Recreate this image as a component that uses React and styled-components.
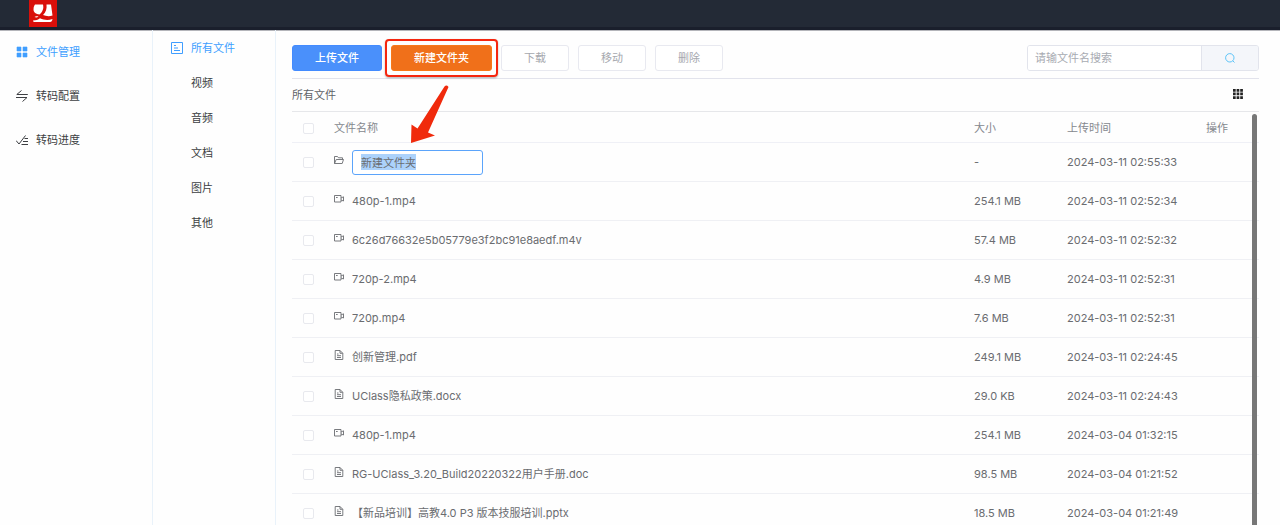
import { useEffect, useRef } from 'react';
import styled, { createGlobalStyle } from 'styled-components';

const GlobalStyle = createGlobalStyle`
  * {
    box-sizing: border-box;
  }

  body {
    margin: 0;
    background: #fefefe;
    color: #606266;
    font-family: Inter, "Noto Sans CJK SC", sans-serif;
    font-size: 11px;
    line-height: 16px;
  }

  button,
  input {
    font: inherit;
  }
`;

const Page = styled.div`
  height: 100vh;
  display: flex;
  flex-direction: column;
  overflow: hidden;
`;

const TopBar = styled.header`
  height: 30px;
  flex-shrink: 0;
  padding-left: 29px;
  background: #232a36;
  border-bottom: 3px solid #1a1f2c;
  box-shadow: 0 1px 0 #b4b5ba;
`;

const Logo = styled.svg`
  display: block;
  width: 28px;
  height: 27px;
`;

const Body = styled.div`
  flex: 1;
  min-height: 0;
  display: flex;
`;

const MainNav = styled.nav`
  width: 153px;
  flex-shrink: 0;
  padding: 14px 16px;
  border-right: 1px solid #e9f2fa;
  display: flex;
  flex-direction: column;
  gap: 28px;
`;

const TypeNav = styled.nav`
  width: 123px;
  flex-shrink: 0;
  padding: 10px 18px;
  border-right: 1px solid #e9f2fa;
  display: flex;
  flex-direction: column;
  gap: 19px;
`;

const NavLink = styled.a`
  display: grid;
  grid-template-columns: 12px 1fr;
  column-gap: 8px;
  align-items: center;
  color: ${({ $active }) => ($active ? '#409eff' : '#3c3e42')};
  text-decoration: none;

  span {
    grid-column: 2;
  }
`;

const Icon = styled.svg`
  display: block;
  flex-shrink: 0;
  width: ${({ $size = 12 }) => $size}px;
  height: ${({ $size = 12 }) => $size}px;
  fill: none;
  stroke: currentColor;
`;

const Content = styled.main`
  flex: 1;
  min-width: 0;
  padding: 15px 21px 0 16px;
  display: flex;
  flex-direction: column;
`;

const Toolbar = styled.div`
  padding-bottom: 7px;
  border-bottom: 1px solid #e2e3ec;
  display: flex;
  justify-content: space-between;
`;

const Actions = styled.div`
  display: flex;
  gap: 9px;
`;

const variants = {
  primary: { bg: '#4a90fb', border: '#438bff', text: '#fff' },
  orange: { bg: '#f0701a', border: '#f87818', text: '#fff' },
  plain: { bg: '#fff', border: '#e8e9f0', text: '#a6a8ae' },
};

const Button = styled.button`
  height: 26px;
  padding: 0 22px;
  border: 1px solid ${({ $variant = 'plain' }) => variants[$variant].border};
  border-radius: 3px;
  background: ${({ $variant = 'plain' }) => variants[$variant].bg};
  color: ${({ $variant = 'plain' }) => variants[$variant].text};
  font-weight: ${({ $variant }) => ($variant ? 500 : 400)};
  white-space: nowrap;
`;

const Highlight = styled.div`
  position: relative;
`;

const HighlightFrame = styled.div`
  position: absolute;
  inset: -6px;
  border: 2px solid #f5260f;
  border-radius: 4px;
  box-shadow: 0 1px 2px rgba(0, 0, 0, 0.3);
  pointer-events: none;
`;

const Arrow = styled.svg`
  position: absolute;
  left: 18px;
  top: 38px;
  width: 42px;
  height: 62px;
  z-index: 1;
  pointer-events: none;
`;

const Search = styled.form`
  width: 232px;
  height: 26px;
  display: flex;
  border: 1px solid #e2e4ec;
  border-radius: 3px;
  overflow: hidden;
`;

const SearchInput = styled.input`
  flex: 1;
  min-width: 0;
  padding: 0 7px;
  border: 0;
  outline: 0;
  background: #fff;

  &::placeholder {
    color: #a8abb2;
  }
`;

const SearchButton = styled.button`
  width: 57px;
  padding: 0;
  border: 0;
  border-left: 1px solid #e2e4ec;
  background: #f4f6fa;
  color: #5cc3f7;
  display: grid;
  place-items: center;
`;

const PathBar = styled.div`
  height: 33px;
  padding-right: 16px;
  border-bottom: 1px solid #e6e7ea;
  display: flex;
  align-items: center;
  justify-content: space-between;
`;

const ViewButton = styled.button`
  padding: 0 0 2px;
  border: 0;
  background: none;
  color: #222;
`;

const ListArea = styled.div`
  position: relative;
  flex: 1;
  min-height: 0;
  overflow: hidden;
`;

const Thumb = styled.div`
  position: absolute;
  top: 2px;
  right: 2px;
  bottom: -6px;
  width: 5px;
  border-radius: 3px;
  background: #777;
`;

const Table = styled.table`
  width: 100%;
  table-layout: fixed;
  border-collapse: separate;
  border-spacing: 0;
  text-align: left;
`;

const HeadCell = styled.th`
  width: ${({ $width }) => ($width ? `${$width}px` : 'auto')};
  height: 31px;
  padding: 2px 0 0;
  border-bottom: 1px solid #eff0f6;
  color: #85888e;
  font-weight: 400;
`;

const Cell = styled.td`
  height: 39px;
  padding: 0;
  border-bottom: 1px solid #eff0f4;
  color: #6a6c70;
  white-space: nowrap;
`;

const Checkbox = styled.input.attrs({ type: 'checkbox' })`
  appearance: none;
  display: block;
  width: 11px;
  height: 11px;
  margin: 0 0 0 11px;
  border: 1px solid #e8e9ee;
  border-radius: 2px;
  background: #fff;
`;

const FileName = styled.div`
  display: flex;
  align-items: center;
  gap: 8px;

  svg {
    margin-bottom: 4px;
  }
`;

const NameInput = styled.input`
  width: 131px;
  height: 25px;
  padding: 0 8px;
  border: 1px solid #5ba4fb;
  border-radius: 3px;
  outline: 0;
  background: #fff;
  color: #6a6c70;

  &::selection {
    background: #acd2fb;
    color: #6a6c70;
  }
`;

const GridIcon = () => (
  <Icon viewBox="0 0 12 12" aria-hidden="true">
    <path
      d="M1 1h4v4H1zM7 1h4v4H7zM1 7h4v4H1zM7 7h4v4H7z"
      fill="currentColor"
      stroke="currentColor"
      strokeWidth=".6"
    />
  </Icon>
);

const SwapIcon = () => (
  <Icon viewBox="0 0 12 12" aria-hidden="true">
    <path d="M5.5 .5 .8 4.500h11M0 7.500h11L6.500 11.500" />
  </Icon>
);

const ProgressIcon = () => (
  <Icon viewBox="0 0 12 12" aria-hidden="true">
    <path d="M0 6.500l3 3.500L9.500 1.500M8.500 4.500H12M7 7.500h5M5.500 10.500H12" />
  </Icon>
);

const ListIcon = () => (
  <Icon viewBox="0 0 12 12" aria-hidden="true">
    <path d="M.5.5h11v11H.5zM3 3.500h2M3 6h4M3 8.500h6" />
  </Icon>
);

const FolderIcon = () => (
  <Icon $size={10} viewBox="0 0 10 10" aria-hidden="true">
    <path d="M.5 8.500v-7h3l1 1.300h4v1.700M.5 8.500l1.700-4h7.300l-1.300 4z" strokeWidth=".9" />
  </Icon>
);

const VideoIcon = () => (
  <Icon $size={10} viewBox="0 0 10 10" aria-hidden="true">
    <path d="M.5 1.500h6.500v6.500H.5zM7 4l2.500-1.200v4.200L7 6M2 3.500h1.700" strokeWidth=".9" />
  </Icon>
);

const DocIcon = () => (
  <Icon $size={10} viewBox="0 0 10 10" aria-hidden="true">
    <path d="M1.200.5H6l2.800 2.800v6.200H1.200zM6 .5v2.800h2.800M3 4h1.500M3 5.700h4M3 7.500h4" strokeWidth=".9" />
  </Icon>
);

const icons = { folder: FolderIcon, video: VideoIcon, doc: DocIcon };

const mainLinks = [
  { label: '文件管理', icon: GridIcon },
  { label: '转码配置', icon: SwapIcon },
  { label: '转码进度', icon: ProgressIcon },
];

const fileTypes = ['所有文件', '视频', '音频', '文档', '图片', '其他'];

const files = [
  { name: '新建文件夹', type: 'folder', size: '-', time: '2024-03-11 02:55:33', editing: true },
  { name: '480p-1.mp4', type: 'video', size: '254.1 MB', time: '2024-03-11 02:52:34' },
  { name: '6c26d76632e5b05779e3f2bc91e8aedf.m4v', type: 'video', size: '57.4 MB', time: '2024-03-11 02:52:32' },
  { name: '720p-2.mp4', type: 'video', size: '4.9 MB', time: '2024-03-11 02:52:31' },
  { name: '720p.mp4', type: 'video', size: '7.6 MB', time: '2024-03-11 02:52:31' },
  { name: '创新管理.pdf', type: 'doc', size: '249.1 MB', time: '2024-03-11 02:24:45' },
  { name: 'UClass隐私政策.docx', type: 'doc', size: '29.0 KB', time: '2024-03-11 02:24:43' },
  { name: '480p-1.mp4', type: 'video', size: '254.1 MB', time: '2024-03-04 01:32:15' },
  { name: 'RG-UClass_3.20_Build20220322用户手册.doc', type: 'doc', size: '98.5 MB', time: '2024-03-04 01:21:52' },
  { name: '【新品培训】高教4.0 P3 版本技服培训.pptx', type: 'doc', size: '18.5 MB', time: '2024-03-04 01:21:49' },
];

const FileRow = ({ file }) => {
  const inputRef = useRef(null);
  const TypeIcon = icons[file.type];

  useEffect(() => {
    if (inputRef.current) {
      inputRef.current.focus();
      inputRef.current.select();
    }
  }, []);

  return (
    <tr>
      <Cell><Checkbox aria-label={file.name} /></Cell>
      <Cell>
        <FileName>
          <TypeIcon />
          {file.editing
            ? <NameInput ref={inputRef} defaultValue={file.name} aria-label="文件名称" />
            : <span>{file.name}</span>}
        </FileName>
      </Cell>
      <Cell>{file.size}</Cell>
      <Cell>{file.time}</Cell>
      <Cell />
    </tr>
  );
};

const App = () => (
  <Page>
    <GlobalStyle />
    <TopBar>
      <Logo viewBox="0 0 28 27" aria-hidden="true">
        <path d="M0 0h28v27H0z" fill="#d90f0a" />
        <path d="M6 4.500h8c1 4-.5 7.500-3.500 10-3.500-.5-6-2-6-5C4.500 7.500 5 5.500 6 4.500z" fill="#fff" />
        <path d="M17.500 4.500h4.500l1.500 11c-3 1-6.500.8-9.500-.5 3-3 4-6.500 3.500-10.500z" fill="#fff" />
        <path d="M4 20.500c3 0 5-.8 7-2.200 4 1.700 8 2.200 12.500.7-.3 2-1 3-2.500 3H6c-1.200 0-2-.5-2-1.500z" fill="#fff" />
        <path d="M5.500 17c1-1 2.500-1 4-.4-1.200.9-2.500 1.200-4 .4z" fill="#fff" />
      </Logo>
    </TopBar>
    <Body>
      <MainNav>
        {mainLinks.map(({ label, icon: LinkIcon }, i) => (
          <NavLink key={label} href="#" $active={i === 0}>
            <LinkIcon />
            <span>{label}</span>
          </NavLink>
        ))}
      </MainNav>
      <TypeNav>
        {fileTypes.map((label, i) => (
          <NavLink key={label} href="#" $active={i === 0}>
            {i === 0 && <ListIcon />}
            <span>{label}</span>
          </NavLink>
        ))}
      </TypeNav>
      <Content>
        <Toolbar>
          <Actions>
            <Button $variant="primary">上传文件</Button>
            <Highlight>
              <Button $variant="orange">新建文件夹</Button>
              <HighlightFrame />
              <Arrow viewBox="0 0 42 62" aria-hidden="true">
                <path
                  d="M35.500 3.500Q37.500 1.500 39.500 4L19 49.500l7 3L2 60 2.500 41.500l6 4z"
                  fill="#f02a0c"
                />
              </Arrow>
            </Highlight>
            <Button>下载</Button>
            <Button>移动</Button>
            <Button>删除</Button>
          </Actions>
          <Search>
            <SearchInput placeholder="请输文件名搜索" aria-label="请输文件名搜索" />
            <SearchButton type="button" aria-label="搜索">
              <Icon $size={10} viewBox="0 0 10 10" aria-hidden="true">
                <circle cx="4.800" cy="4.800" r="4.200" />
                <path d="M7.800 7.800l1.700 1.700" />
              </Icon>
            </SearchButton>
          </Search>
        </Toolbar>
        <PathBar>
          <span>所有文件</span>
          <ViewButton aria-label="网格视图">
            <Icon $size={10} viewBox="0 0 10 10" aria-hidden="true">
              <path
                d="M0 0h2.700v2.700H0zM3.600 0h2.700v2.700H3.600zM7.200 0h2.700v2.700H7.200zM0 3.600h2.700v2.700H0zM3.600 3.600h2.700v2.700H3.600zM7.200 3.600h2.700v2.700H7.200zM0 7.200h2.700v2.700H0zM3.600 7.200h2.700v2.700H3.600zM7.200 7.200h2.700v2.700H7.200z"
                fill="currentColor"
                stroke="none"
              />
            </Icon>
          </ViewButton>
        </PathBar>
        <ListArea>
          <Table>
            <thead>
              <tr>
                <HeadCell $width={42}><Checkbox aria-label="全选" /></HeadCell>
                <HeadCell>文件名称</HeadCell>
                <HeadCell $width={93}>大小</HeadCell>
                <HeadCell $width={139}>上传时间</HeadCell>
                <HeadCell $width={53}>操作</HeadCell>
              </tr>
            </thead>
            <tbody>
              {files.map((file) => (
                <FileRow key={file.time + file.name} file={file} />
              ))}
            </tbody>
          </Table>
          <Thumb />
        </ListArea>
      </Content>
    </Body>
  </Page>
);

export default App;
